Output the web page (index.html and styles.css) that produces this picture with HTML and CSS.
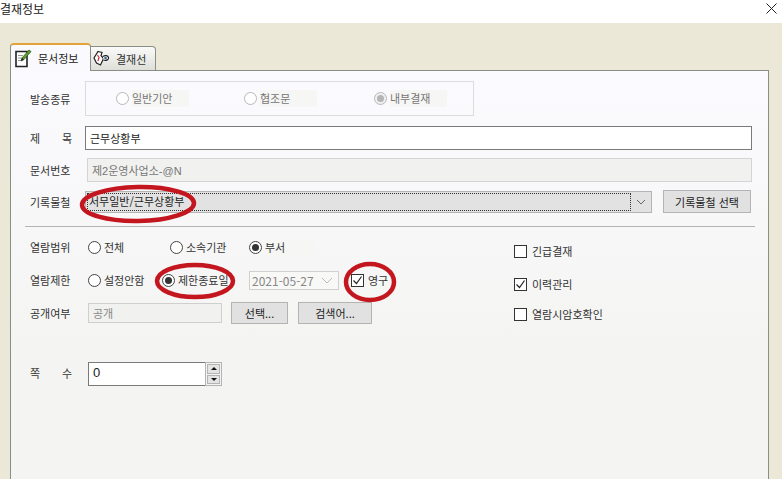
FILE: index.html
```html
<!DOCTYPE html>
<html lang="ko">
<head>
<meta charset="utf-8">
<title>결재정보</title>
<link rel="stylesheet" href="styles.css">
</head>
<body>
<div class="window">
  <header class="titlebar">
    <span class="title">결재정보</span>
    <svg class="close" width="11" height="11" viewBox="0 0 11 11"><path d="M.5.5l10 10M10.5.5l-10 10" stroke="#222" fill="none"/></svg>
  </header>
  <main class="client">
    <nav class="tabs">
      <div class="tab active">
        <svg width="17" height="19" viewBox="0 0 17 19">
          <path d="M1 2.500h11v15h-11z" fill="#fff" stroke="#222" stroke-width="1.600"/>
          <path d="M3 6.500h5M3 9h4M3 11.500h4" stroke="#999"/>
          <path d="M6 12l1-3 7-8 2 1.500-7 8z" fill="#5f9c32" stroke="#2d5a14" stroke-width=".8"/>
          <path d="M6 12l3-1.500-2-1.500z" fill="#222"/>
        </svg>
        <span>문서정보</span>
      </div>
      <div class="tab">
        <svg width="17" height="17" viewBox="0 0 17 17">
          <path d="M5 1.500l4 1-1 3 2.500 3L7.500 15l-4-2L1 8z" fill="#fff" stroke="#222" stroke-width="1.200"/>
          <path d="M10 6.500c2-1.500 5-1 5.500 1s-2 3.500-5 2.500" fill="#fff" stroke="#222" stroke-width="1.200"/>
          <path d="M4.500 5l1.500 2.500-1 3.500" fill="none" stroke="#c33" stroke-width="1.200"/>
          <circle cx="12.500" cy="8" r="1.300" fill="#3a6a8a"/>
        </svg>
        <span>결재선</span>
      </div>
    </nav>
    <section class="panel">
      <div class="row row-type">
        <div class="label">발송종류</div>
        <div class="group">
          <div class="opt disabled"><i class="radio"></i><span class="patch">일반기안</span></div>
          <div class="opt disabled"><i class="radio"></i><span class="patch">협조문</span></div>
          <div class="opt disabled"><i class="radio on"></i><span class="patch">내부결재</span></div>
        </div>
      </div>
      <div class="row row-title">
        <div class="label spread"><span>제</span><span>목</span></div>
        <div class="field title-field">근무상황부</div>
      </div>
      <div class="row row-doc">
        <div class="label">문서번호</div>
        <div class="field doc-field">제2운영사업소-@N</div>
      </div>
      <div class="row row-rec">
        <div class="label">기록물철</div>
        <div class="select">
          <div class="select-value">서무일반/근무상황부</div>
          <svg width="20" height="20" viewBox="0 0 20 20"><path d="M6 8l4 4 4-4" fill="none" stroke="#666"/></svg>
        </div>
        <div class="btn btn-rec">기록물철 선택</div>
      </div>
      <hr class="rule">
      <div class="lower">
        <div class="left">
          <div class="row row-lo">
            <div class="label wide">열람범위</div>
            <div class="opt w82"><i class="radio"></i><span>전체</span></div>
            <div class="opt w79"><i class="radio"></i><span>소속기관</span></div>
            <div class="opt"><i class="radio on"></i><span class="patch short">부서</span></div>
          </div>
          <div class="row row-lo">
            <div class="label wide">열람제한</div>
            <div class="opt w74"><i class="radio"></i><span>설정안함</span></div>
            <div class="opt w87"><i class="radio on"></i><span>제한종료일</span></div>
            <div class="date">
              <span>2021-05-27</span>
              <svg width="14" height="14" viewBox="0 0 14 14"><path d="M2 5l5 5 5-5" fill="none" stroke="#bbb"/></svg>
            </div>
            <div class="check"><i class="box on"><svg width="11" height="11" viewBox="0 0 11 11"><path d="M1.500 5.500l3 3 5-7" fill="none" stroke="#222" stroke-width="1.200"/></svg></i><span>영구</span></div>
          </div>
          <div class="row row-pub">
            <div class="label wide">공개여부</div>
            <div class="field pub-field">공개</div>
            <div class="btn btn-sel">선택...</div>
            <div class="btn btn-key">검색어...</div>
          </div>
          <div class="row row-page">
            <div class="label wide spread-w"><span>쪽</span><span>수</span></div>
            <div class="page-field">0</div>
            <div class="spin">
              <div class="spin-btn"><i class="tri up"></i></div>
              <div class="spin-btn"><i class="tri down"></i></div>
            </div>
          </div>
        </div>
        <div class="right">
          <div class="check"><i class="box"></i><span>긴급결재</span></div>
          <div class="check"><i class="box on"><svg width="11" height="11" viewBox="0 0 11 11"><path d="M1.500 5.500l3 3 5-7" fill="none" stroke="#222" stroke-width="1.200"/></svg></i><span>이력관리</span></div>
          <div class="check"><i class="box"></i><span>열람시암호확인</span></div>
        </div>
      </div>
    </section>
  </main>
  <svg class="marks" width="782" height="479" viewBox="0 0 782 479">
    <ellipse cx="138" cy="204" rx="56" ry="17" transform="rotate(-1 138 204)"/>
    <ellipse cx="195" cy="281" rx="38" ry="16"/>
    <ellipse cx="370" cy="282" rx="24" ry="18"/>
  </svg>
</div>
</body>
</html>
```
FILE: styles.css
```css
* { box-sizing: border-box; }
html, body { margin: 0; padding: 0; }
body { font-family: "Noto Sans CJK KR", "Liberation Sans", sans-serif; font-size: 11px; color: #333; }
i { display: block; font-style: normal; }
.window { position: relative; width: 782px; height: 479px; overflow: hidden; display: flex; flex-direction: column; background: #fff; }
.titlebar { height: 23px; flex: none; display: flex; align-items: center; justify-content: space-between; padding: 0 5px 6px 0; background: #fff; }
.title { font-size: 12px; color: #222; }
.close { flex: none; }
.client { flex: 1; min-height: 0; display: flex; flex-direction: column; background: #ebe8d8; padding: 21px 13px 0 10px; }
.tabs { height: 27px; flex: none; display: flex; align-items: flex-end; position: relative; z-index: 1; margin-bottom: -1px; }
.tab { display: flex; align-items: center; gap: 6px; height: 25px; width: 65px; padding: 0 0 0 2px; background: linear-gradient(#fafafa, #dedfd8); border: 1px solid #8a8f85; border-left: none; border-radius: 0 4px 0 0; font-size: 11px; }
.tab.active { width: 81px; height: 28px; padding: 0 0 0 4px; background: #fafafe; border: 1px solid #8a8f85; border-top: 2px solid #e3a23a; border-bottom: none; border-radius: 4px 4px 0 0; color: #222; }
.panel { flex: 1; min-height: 0; border: 1px solid #8a8f85; border-bottom: none; padding: 10px 16px 0 19px; background: linear-gradient(#fbfbff, #f4f4f2 70%); }
.row { display: flex; align-items: center; }
.label { width: 55px; flex: none; color: #333; }
.label.wide { width: 58px; }
.spread { display: flex; justify-content: space-between; width: 42px; margin-right: 13px; }
.spread-w { display: flex; justify-content: space-between; width: 42px !important; margin-right: 16px; padding-bottom: 2px; }
.row-type { height: 35px; }
.group { width: 389px; height: 35px; border: 1px solid #dcdcdc; display: grid; grid-template-columns: 128px 130px 1fr; align-items: center; padding-left: 30px; }
.opt { display: flex; align-items: center; gap: 3px; }
.opt.disabled { color: #777; }
.opt.disabled .radio { border-color: #b8b8b8; }
.opt.disabled .radio.on::after { background: #b5b5b5; }
.opt.disabled .radio.on { background: #f0f0f0; }
.patch { display: block; width: 57px; line-height: 17px; background: #f6f6f4; }
.patch.short { width: 50px; }
.radio { width: 13px; height: 13px; flex: none; border: 1px solid #444; border-radius: 50%; background: #fff; position: relative; }
.radio.on::after { content: ""; position: absolute; left: 2px; top: 2px; width: 7px; height: 7px; border-radius: 50%; background: #333; }
.w82 { width: 82px; }
.w79 { width: 79px; }
.w74 { width: 74px; }
.w87 { width: 87px; }
.field { display: flex; align-items: center; }
.row-title { height: 24px; margin-top: 10px; }
.title-field { width: 667px; height: 24px; background: #fff; border: 1px solid #7a7a7a; padding-left: 4px; color: #222; }
.row-doc { height: 24px; margin-top: 8px; }
.doc-field { width: 665px; height: 24px; margin-left: 2px; background: #f1f1ef; border: 1px solid #d4d4d4; padding-left: 4px; color: #777; font-family: "Liberation Sans", "Noto Sans CJK KR", sans-serif; }
.row-rec { height: 23px; margin-top: 8px; align-items: flex-end; }
.row-rec .label { align-self: center; }
.select { width: 567px; height: 22px; display: flex; align-items: center; background: #e2e2e2; border: 1px solid #b4b4b4; padding: 1px 0 1px 1px; }
.select-value { flex: 1; height: 18px; border: 1px dotted #333; line-height: 15px; padding-left: 1px; color: #222; }
.select svg { flex: none; }
.btn { display: flex; align-items: center; justify-content: center; background: #e1e1e1; border: 1px solid #b4b4b4; color: #222; }
.btn-rec { width: 88px; height: 23px; margin-left: 11px; }
.rule { border: none; border-top: 1px solid #b4b4b4; margin: 13px -3px 0 -5px; height: 0; }
.lower { display: flex; }
.left { width: 484px; flex: none; padding-top: 10px; }
.row-lo { height: 20px; margin-bottom: 13px; }
.date { width: 90px; height: 19px; display: flex; align-items: center; justify-content: space-between; border: 1px solid #d0d0d0; background: #f8f8f7; padding: 0 4px 0 2px; color: #888; font-size: 12px; margin-right: 12px; }
.check { display: flex; align-items: center; gap: 4px; color: #333; }
.box { width: 13px; height: 13px; flex: none; border: 1px solid #333; background: #fff; display: flex; align-items: center; justify-content: center; }
.row-pub { height: 22px; margin-top: -1px; }
.pub-field { width: 134px; height: 20px; background: #f1f1ef; border: 1px solid #cfcfcf; padding-left: 4px; color: #888; }
.btn-sel { width: 57px; height: 22px; margin-left: 9px; }
.btn-key { width: 74px; height: 22px; margin-left: 10px; }
.row-page { height: 24px; margin-top: 38px; }
.page-field { width: 117px; height: 24px; background: #fff; border: 1px solid #7a7a7a; border-right: none; padding-left: 4px; font-size: 13px; line-height: 20px; color: #222; font-family: "Liberation Sans", sans-serif; }
.spin { width: 17px; height: 24px; border: 1px solid #b4b4b4; display: flex; flex-direction: column; gap: 1px; padding: 1px; }
.spin-btn { flex: 1; background: #e4e4e4; border: 1px solid #b4b4b4; display: flex; align-items: center; justify-content: center; }
.tri { width: 0; height: 0; border-left: 3px solid transparent; border-right: 3px solid transparent; }
.tri.up { border-bottom: 3px solid #111; }
.tri.down { border-top: 3px solid #111; }
.right { display: grid; grid-template-rows: 33px 30px 13px; padding-top: 18px; }
.right .check { align-items: flex-start; line-height: 13px; gap: 5px; }
.marks { position: absolute; left: 0; top: 0; pointer-events: none; }
.marks ellipse { fill: none; stroke: #c4161f; stroke-width: 4.500; }
```
